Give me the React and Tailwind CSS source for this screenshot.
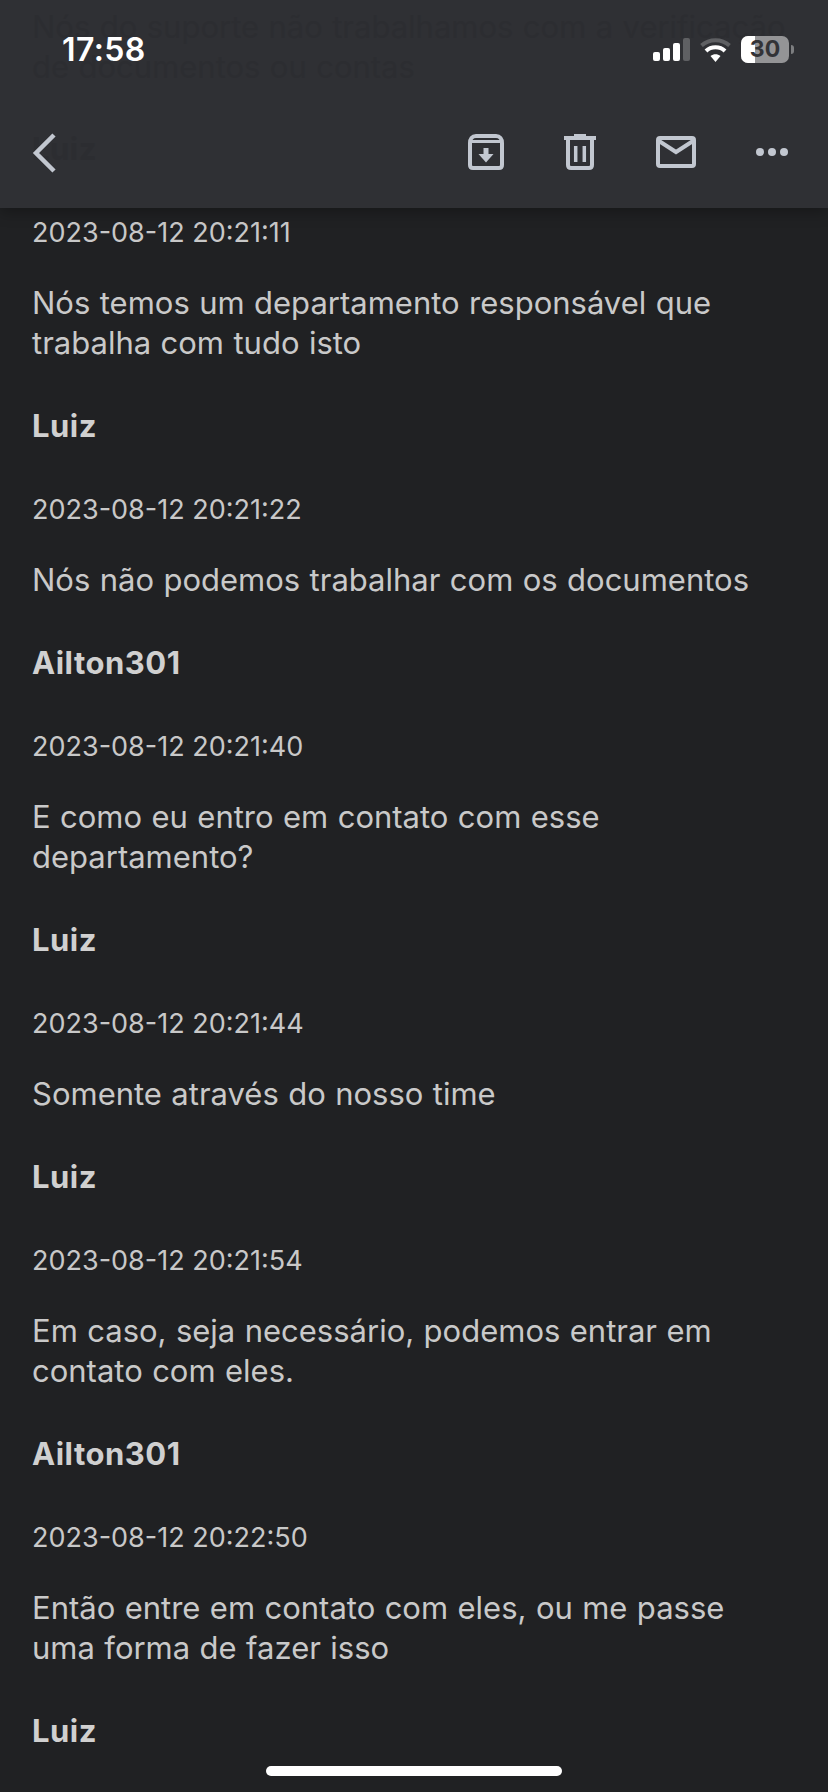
const intro = { body: ["Nós do suporte não trabalhamos com a verificação", "de documentos ou contas"] };
const messages = [
  { date: "2023-08-12 20:21:11", body: ["Nós temos um departamento responsável que", "trabalha com tudo isto"] },
  { name: "Luiz", date: "2023-08-12 20:21:22", body: ["Nós não podemos trabalhar com os documentos"] },
  { name: "Ailton301", date: "2023-08-12 20:21:40", body: ["E como eu entro em contato com esse", "departamento?"] },
  { name: "Luiz", date: "2023-08-12 20:21:44", body: ["Somente através do nosso time"] },
  { name: "Luiz", date: "2023-08-12 20:21:54", body: ["Em caso, seja necessário, podemos entrar em", "contato com eles."] },
  { name: "Ailton301", date: "2023-08-12 20:22:50", body: ["Então entre em contato com eles, ou me passe", "uma forma de fazer isso"] },
  { name: "Luiz" },
];

function Message({ m }) {
  return (
    <div className="flex flex-col">
      {m.name && <div className="mb-[44px] h-10 text-[31px] leading-10 font-bold tracking-[0.5px] text-[#d0d0d0]">{m.name}</div>}
      {m.date && <div className="mb-[30px] h-10 text-[27px] leading-10 text-[#c8c8c8]">{m.date}</div>}
      {m.body && (
        <div className="mb-[43px] text-[31px] leading-10 [word-spacing:0.7px] text-[#c9c9c9]">
          {m.body.map((l) => (
            <div key={l}>{l}</div>
          ))}
        </div>
      )}
    </div>
  );
}

function ArchiveIcon() {
  return (
    <svg width="36" height="36" viewBox="0 0 36 36" fill="none">
      <path d="M2 9c0-4 2-7 6-7h20c4 0 6 3 6 7v22c0 2-1 3-3 3H5c-2 0-3-1-3-3V9Z" stroke="#c2c7d0" strokeWidth="4" />
      <path d="M3 7.500h30" stroke="#c2c7d0" strokeWidth="3" />
      <path d="M18 14v8" stroke="#c2c7d0" strokeWidth="5" />
      <path d="M10.500 20h15L18 28.500 10.500 20Z" fill="#c2c7d0" />
    </svg>
  );
}
function TrashIcon() {
  return (
    <svg width="32" height="36" viewBox="0 0 32 36" fill="none">
      <path d="M0 2h32v4H0z" fill="#c2c7d0" />
      <path d="M10 0h12v3H10z" fill="#c2c7d0" />
      <path d="M4 5v26c0 2 1 3 3 3h18c2 0 3-1 3-3V5" stroke="#c2c7d0" strokeWidth="4" />
      <path d="M11.700 12v16M20.300 12v16" stroke="#c2c7d0" strokeWidth="3.500" />
    </svg>
  );
}
function MailIcon() {
  return (
    <svg width="40" height="32" viewBox="0 0 40 32" fill="none">
      <rect x="2" y="2" width="36" height="28" rx="2" stroke="#c2c7d0" strokeWidth="4" />
      <path d="M3 5l17 11L37 5" stroke="#c2c7d0" strokeWidth="4" />
    </svg>
  );
}
function DotsIcon() {
  return (
    <svg width="32" height="8" viewBox="0 0 32 8" fill="#c2c7d0">
      <circle cx="4" cy="4" r="4" />
      <circle cx="16" cy="4" r="4" />
      <circle cx="28" cy="4" r="4" />
    </svg>
  );
}
function BackIcon() {
  return (
    <svg width="24" height="40" viewBox="0 0 24 40" fill="none">
      <path d="M22 2L4 20l18 18" stroke="#c2c7d0" strokeWidth="4.500" />
    </svg>
  );
}
function StatusIcons() {
  return (
    <div className="flex items-center">
      <svg width="37" height="23" viewBox="0 0 37 23">
        <rect x="0" y="14" width="7" height="9" rx="2" fill="#fff" />
        <rect x="10" y="10" width="7" height="13" rx="2" fill="#fff" />
        <rect x="20" y="5" width="7" height="18" rx="2" fill="#fff" />
        <rect x="30" y="0" width="7" height="23" rx="2" fill="#5f6063" />
      </svg>
      <svg className="ml-[10px]" width="31" height="24" viewBox="0 0 31 24" fill="none">
        <path d="M1.500 7.500c8-7 20-7 28 0" stroke="#5f6063" strokeWidth="4" />
        <path d="M6 13c5-5 14-5 19 0" stroke="#fff" strokeWidth="4" />
        <path d="M10.500 18c3-2.500 7-2.500 10 0l-5 6-5-6Z" fill="#fff" />
      </svg>
      <div className="relative ml-[10px] flex h-[27px] w-[48px] items-center justify-center overflow-hidden rounded-[7px] bg-[#949496]">
        <div className="absolute inset-y-0 left-0 w-[14px] bg-white" />
        <span className="relative text-[23px] leading-none font-bold text-[#323337]">30</span>
      </div>
      <div className="ml-[2px] h-[9px] w-[3px] rounded-r-full bg-[#7d7e80]" />
    </div>
  );
}

export default function App() {
  return (
    <div className="relative flex h-[1792px] w-[828px] flex-col overflow-hidden bg-[#202123] font-['Inter','Liberation_Sans',sans-serif]">
      <header className="relative z-10 h-[208px] shrink-0 overflow-hidden bg-[#2f3034] shadow-[0_4px_14px_rgba(0,0,0,0.3)]">
        <div className="absolute top-[7px] left-8 text-[31px] leading-10 [word-spacing:0.7px] whitespace-nowrap text-[#2c2d31]">
          {intro.body.map((l) => (
            <div key={l}>{l}</div>
          ))}
          <div className="mt-[42px] font-bold tracking-[0.5px]">Luiz</div>
        </div>
        <div className="relative flex h-[133px] items-start justify-between pt-[36px] pr-[34px] pl-[62px]">
          <span className="text-[32px] leading-[27px] font-semibold tracking-[0.4px] text-white">17:58</span>
          <StatusIcons />
        </div>
        <div className="relative flex items-start justify-between pr-[40px] pl-[32px]">
          <BackIcon />
          <div className="flex items-center gap-[60px] pt-px">
            <ArchiveIcon />
            <TrashIcon />
            <MailIcon />
            <DotsIcon />
          </div>
        </div>
      </header>

      <main className="flex flex-col px-8 pt-[5px]">
        {messages.map((m, i) => (
          <Message key={i} m={m} />
        ))}
      </main>

      <div className="absolute bottom-[16px] left-[266px] h-[10px] w-[296px] rounded-full bg-white" />
    </div>
  );
}
